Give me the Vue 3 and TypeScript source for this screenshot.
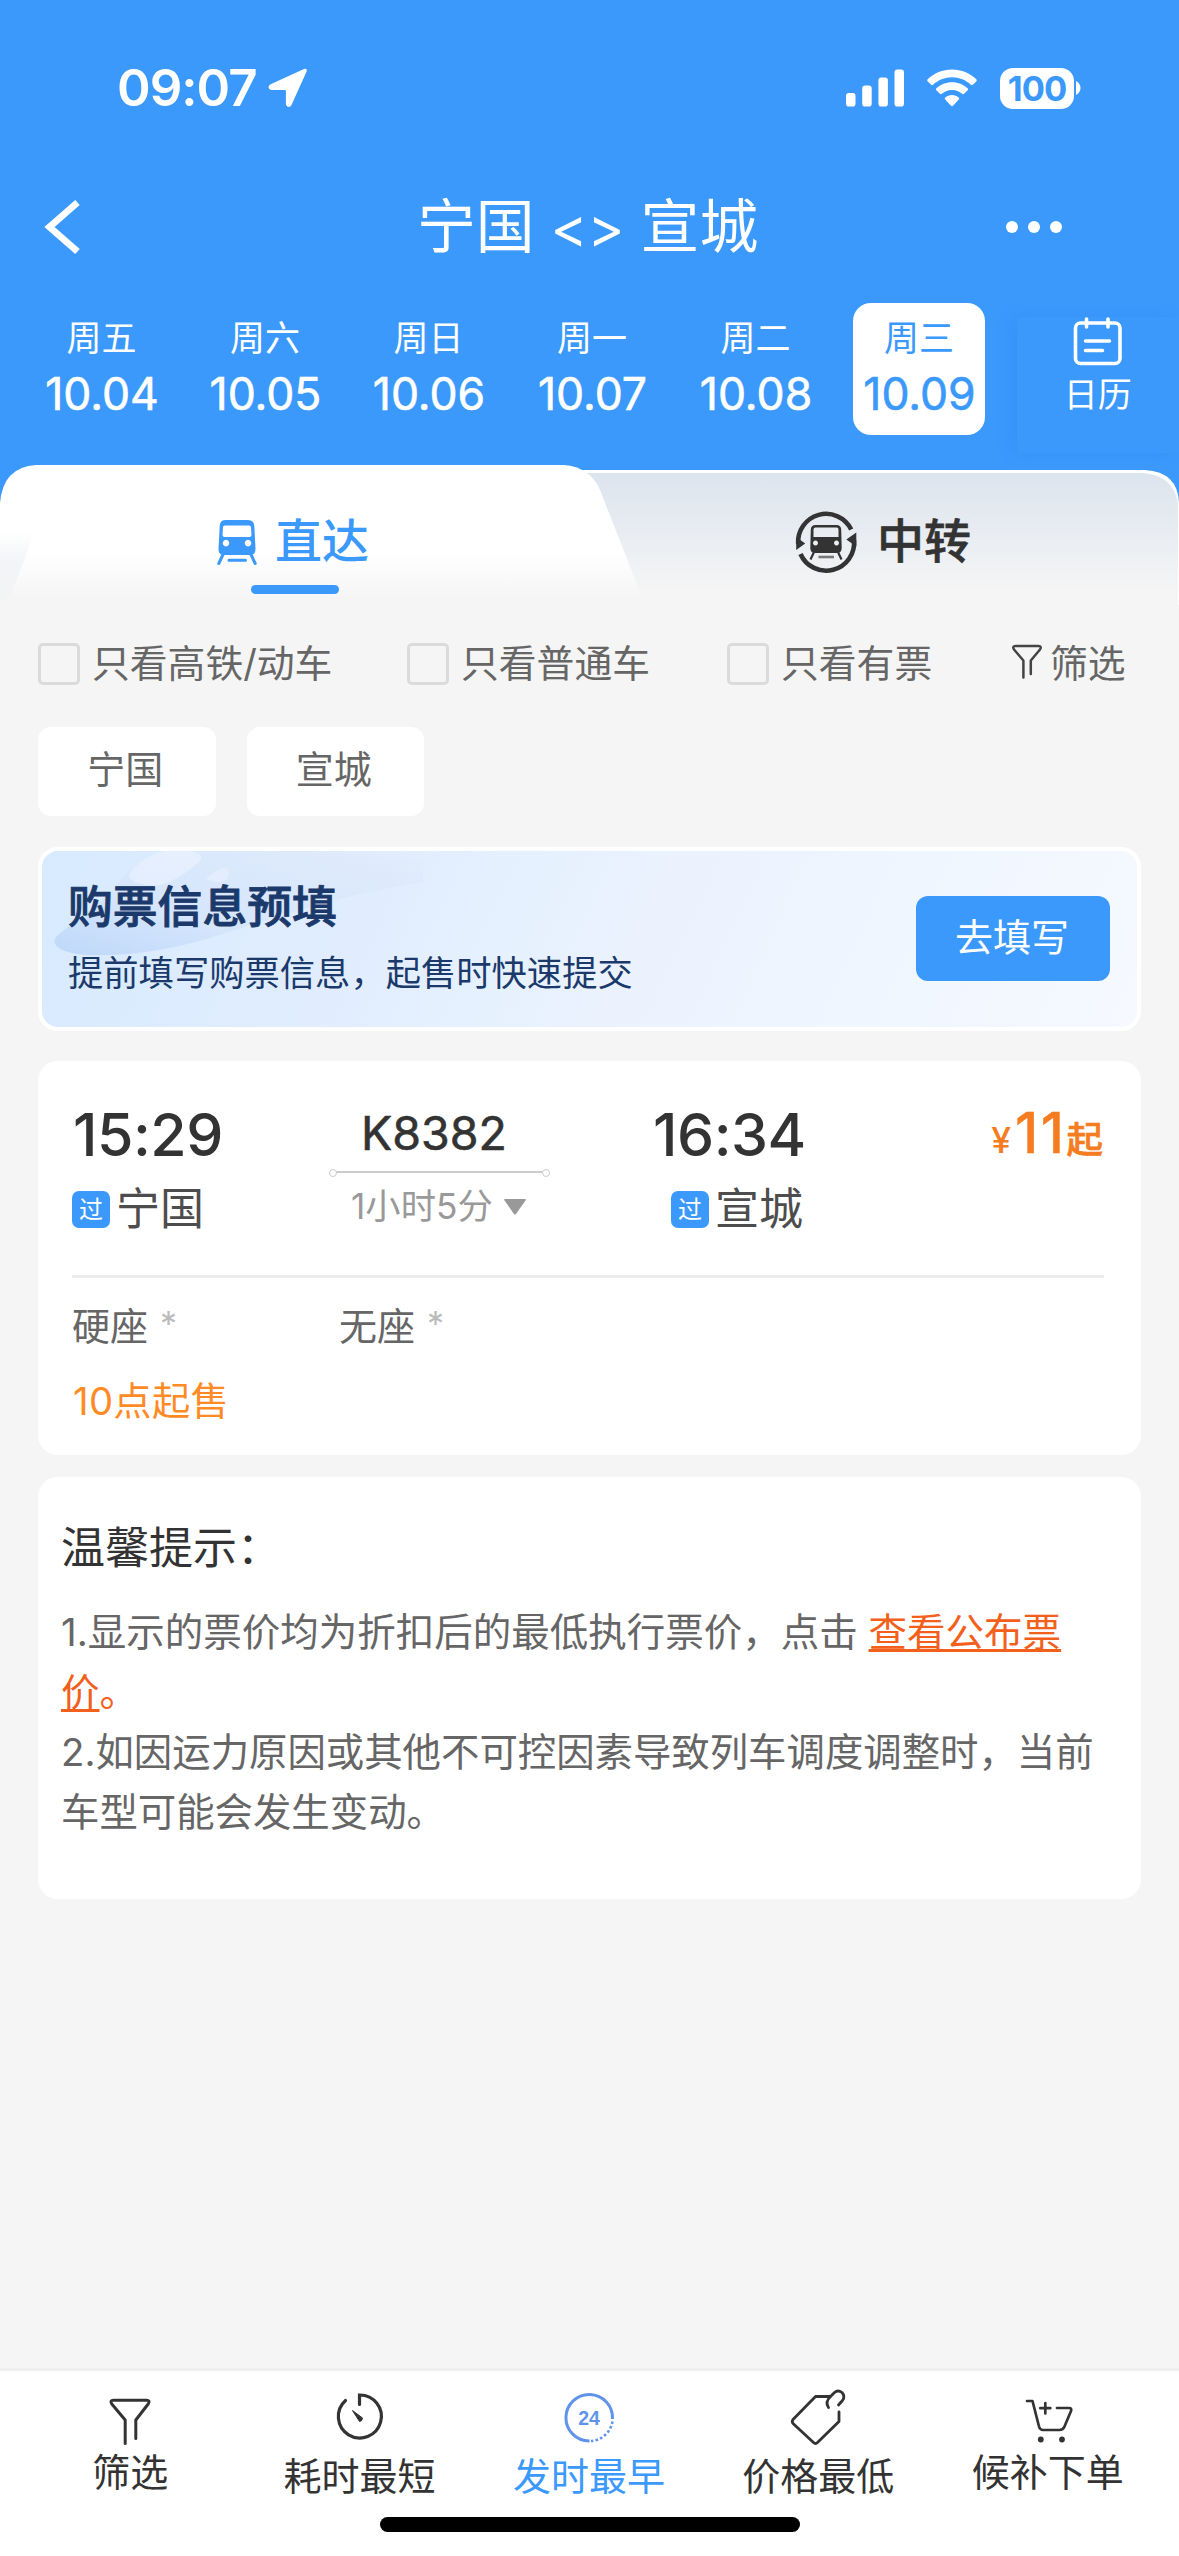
<script setup lang="ts">
interface DayItem {
  week: string
  date: string
  active?: boolean
}

const days: DayItem[] = [
  { week: '周五', date: '10.04' },
  { week: '周六', date: '10.05' },
  { week: '周日', date: '10.06' },
  { week: '周一', date: '10.07' },
  { week: '周二', date: '10.08' },
  { week: '周三', date: '10.09', active: true },
]

const checks: string[] = ['只看高铁/动车', '只看普通车', '只看有票']
const stations: string[] = ['宁国', '宣城']
const seats: string[] = ['硬座', '无座']
</script>

<template>
  <div class="page">
    <header class="top">
      <div class="status">
        <span class="clock">09:07</span>
        <svg class="loc" width="40" height="40" viewBox="0 0 40 40">
          <path d="M36 1 2.600 16.200C-.6 17.700.3 21.900 3.600 21.900H17a.9.9 0 0 1 .9.900V35.800c0 3.600 4.200 4.300 5.600 1.200L38.600 3.500C39.400 1.500 38 .2 36 1Z" fill="#fff" />
        </svg>
        <svg class="signal" width="58" height="38" viewBox="0 0 58 38">
          <rect x="0" y="24" width="9.500" height="13.500" rx="2.800" fill="#fff" />
          <rect x="16.200" y="16.500" width="9.500" height="21" rx="2.800" fill="#fff" />
          <rect x="32.400" y="8.500" width="9.500" height="29" rx="2.800" fill="#fff" />
          <rect x="48.500" y="0.500" width="9.500" height="37" rx="2.800" fill="#fff" />
        </svg>
        <svg class="wifi" width="50" height="38" viewBox="0 0 50 38">
          <path d="M25 .5C34.500.5 43 4.200 49.300 10.200c.6.6.6 1.400.1 2l-3.600 3.600c-.5.5-1.300.5-1.900 0C38.900 11.200 32.300 8.300 25 8.300S11.100 11.200 6.100 15.800c-.6.5-1.400.5-1.900 0L.6 12.200c-.5-.6-.5-1.400.1-2C7 4.200 15.500.5 25 .5Z" fill="#fff" />
          <path d="M25 13.200c6 0 11.500 2.300 15.600 6 .6.6.6 1.400.1 2l-3.700 3.600c-.5.5-1.300.5-1.900 0-2.700-2.300-6.200-3.800-10.100-3.800s-7.400 1.500-10.100 3.800c-.6.5-1.400.5-1.900 0L9.300 21.200c-.5-.6-.5-1.400.1-2 4.100-3.700 9.600-6 15.600-6Z" fill="#fff" />
          <path d="M25 26c2.600 0 4.900.9 6.700 2.400.7.600.7 1.400.1 2L26 36.800c-.6.600-1.400.600-2 0L18.200 30.400c-.6-.6-.6-1.400.1-2C20.100 26.900 22.400 26 25 26Z" fill="#fff" />
        </svg>
        <div class="battery">100</div>
        <svg class="nub" width="5" height="14" viewBox="0 0 5 14"><path d="M0 0c6 3 6 11 0 14Z" fill="#fff" /></svg>
      </div>

      <div class="nav">
        <svg class="back" width="36" height="54" viewBox="0 0 36 54">
          <path d="M32.500 2.500 4.500 27 32.500 51.500" fill="none" stroke="#fff" stroke-width="6.800" />
        </svg>
        <div class="title"><span>宁国</span><span class="swap">&lt;&gt;</span><span>宣城</span></div>
        <div class="more"><i></i><i></i><i></i></div>
      </div>

      <div class="dates">
        <div v-for="d in days" :key="d.date" class="day" :class="{ active: d.active }">
          <span class="week">{{ d.week }}</span>
          <span class="date">{{ d.date }}</span>
        </div>
        <div class="calendar">
          <svg width="50" height="50" viewBox="0 0 50 50" fill="none" stroke="#fff" stroke-linecap="round">
            <rect x="2.500" y="6" width="44.500" height="40.500" rx="5" stroke-width="3.600" />
            <path d="M13.500 2v8M35 2v8M12.500 24h24M12.500 33.500h17" stroke-width="3.600" />
          </svg>
          <span>日历</span>
        </div>
      </div>
    </header>

    <nav class="tabs">
      <svg class="tabs-bg" width="1179" height="140" viewBox="0 0 1179 140">
        <defs>
          <linearGradient id="idleFill" x1="0" y1="0" x2="0" y2="1">
            <stop offset="0" stop-color="#dce4ee" />
            <stop offset="0.9" stop-color="#f5f5f5" />
          </linearGradient>
          <linearGradient id="activeFill" x1="0" y1="0" x2="0" y2="1">
            <stop offset="0" stop-color="#fff" />
            <stop offset="0.62" stop-color="#fff" />
            <stop offset="0.96" stop-color="#f5f5f5" />
          </linearGradient>
          <linearGradient id="edgeFill" x1="0" y1="0" x2="0" y2="1">
            <stop offset="0" stop-color="#eff1f5" stop-opacity="0" />
            <stop offset="0.4" stop-color="#eff1f5" stop-opacity="0.7" />
            <stop offset="1" stop-color="#f5f5f5" />
          </linearGradient>
        </defs>
        <rect width="1179" height="60" fill="#3b99fc" />
        <path d="M300 5H1145Q1178 7 1179 38V140H300Z" fill="#fff" />
        <path d="M300 8H1143Q1173 10 1178 38V140H300Z" fill="url(#idleFill)" />
        <path d="M0 140V38Q3 2 36 0H564Q590 2 600 25L645 140Z" fill="url(#activeFill)" />
        <path d="M0 140V66H35L7 140Z" fill="url(#edgeFill)" />
      </svg>
      <div class="tab direct">
        <svg width="40" height="46" viewBox="0 0 40 46">
          <path fill-rule="evenodd" d="M8 1H31Q37 1 37.300 7L38.500 30Q38.500 36 33 36H7Q1.500 36 1.500 30L2.700 7Q3 1 8 1ZM8 6.500Q6 6.500 6 8.500L5.500 16Q5.500 18 7.500 18H32.500Q34.500 18 34.500 16L34 8.500Q34 6.500 32 6.500ZM9 20.800a3.300 3.300 0 1 0 .01 0ZM31 20.800a3.300 3.300 0 1 0 .01 0Z" fill="#3b99fc" />
          <path d="M6 35.500 1.800 44.500M34 35.500 38.200 44.500M12 41.200H28.500" stroke="#3b99fc" stroke-width="3" fill="none" stroke-linecap="round" />
        </svg>
        <span>直达</span>
        <i class="underline"></i>
      </div>
      <div class="tab transfer">
        <svg width="62" height="62" viewBox="0 0 62 62">
          <path d="M56.200 18.400A28 28 0 0 0 3.200 33M5.500 43A28 28 0 0 0 59 29" stroke="#333" stroke-width="4.600" fill="none" />
          <path d="M1.200 39V26L10.200 32.500ZM61.300 21.500V35.500L51.300 28.500Z" fill="#333" />
          <path fill-rule="evenodd" d="M20.500 14H41.500Q46 14 46.200 18.500L46.700 37Q46.700 42 42 42H20Q15.300 42 15.300 37L15.800 18.500Q16 14 20.500 14ZM20.500 16.500Q18.500 16.500 18.500 18.500V26H43.500V18.500Q43.500 16.500 41.500 16.500ZM20.500 29.500a2.500 2.500 0 1 0 .01 0ZM41.500 29.500a2.500 2.500 0 1 0 .01 0Z" fill="#333" />
          <path d="M18.800 41.500 15.500 48.500M43.200 41.500 46.500 48.500" stroke="#333" stroke-width="2.200" />
          <path d="M23.500 46H39" stroke="#777" stroke-width="2.600" />
        </svg>
        <span>中转</span>
      </div>
    </nav>

    <div class="filters">
      <label v-for="c in checks" :key="c" class="check"><i></i><span>{{ c }}</span></label>
      <div class="screen">
        <svg width="30" height="36" viewBox="0 0 30 36">
          <path d="M11.400 33.500V16.500L2 5.500Q0 2 3.500 2H26.500Q30 2 28 5.500L18.800 16.500V30" fill="none" stroke="#444" stroke-width="2.500" stroke-linecap="round" stroke-linejoin="round" />
        </svg><span>筛选</span>
      </div>
    </div>

    <div class="chips">
      <span v-for="s in stations" :key="s" class="chip">{{ s }}</span>
    </div>

    <section class="banner">
      <svg class="banner-art" width="380" height="110" viewBox="0 0 380 110">
        <defs>
          <linearGradient id="trainFill" x1="0" y1="1" x2="1" y2="0">
            <stop offset="0" stop-color="#b9d5f8" />
            <stop offset="0.35" stop-color="#d3e4fc" />
            <stop offset="1" stop-color="#e2ecfb" />
          </linearGradient>
        </defs>
        <path d="M15 85C30 72 60 52 75 34C88 16 105 4 122 0H300Q340 8 381 9V31C330 38 250 60 190 80C140 97 90 106 45 104C15 102 8 92 15 85Z" fill="url(#trainFill)" opacity=".85" />
        <path d="M88 22C98 8 112 2 122 0H150Q165 4 156 12C145 21 130 32 118 34C98 35 84 30 88 22Z" fill="#e7f0fe" opacity=".8" />
        <path d="M164 28Q176 16 184 17Q190 20 184 29Q174 34 164 28Z" fill="#e7f0fe" opacity=".7" />
      </svg>
      <div class="banner-text">
        <h2>购票信息预填</h2>
        <p>提前填写购票信息，起售时快速提交</p>
      </div>
      <button class="fill">去填写</button>
    </section>

    <section class="train">
      <div class="route">
        <div class="stop from">
          <div class="time">15:29</div>
          <div class="place"><em>过</em>宁国</div>
        </div>
        <div class="middle">
          <div class="code">K8382</div>
          <div class="line"></div>
          <div class="duration">1小时5分
            <svg width="22" height="16" viewBox="0 0 22 16"><path d="M1 0H21Q22.500 0 21.500 1.500L12 15Q11 16 10 15L.5 1.500Q-.5 0 1 0Z" fill="#999" /></svg>
          </div>
        </div>
        <div class="stop to">
          <div class="time">16:34</div>
          <div class="place"><em>过</em>宣城</div>
        </div>
        <div class="price"><small>¥</small><b>11</b><strong>起</strong></div>
      </div>
      <div class="seats">
        <div v-for="s in seats" :key="s" class="seat">{{ s }}<span>*</span></div>
      </div>
      <div class="sale">10点起售</div>
    </section>

    <section class="tips">
      <h3>温馨提示：</h3>
      <p class="first">1.显示的票价均为折扣后的最低执行票价，点击 <span class="link"><u>查看公布票<br />价</u>。</span></p>
      <p>2.如因运力原因或其他不可控因素导致列车调度调整时，当前<br />车型可能会发生变动。</p>
    </section>

    <footer class="bottom">
      <div class="item short">
        <svg width="46" height="60" viewBox="0 0 46 60">
          <path d="M18.200 50.500V27L4.800 11Q2.500 7.200 6.500 7.200H39.500Q43.500 7.200 41.200 11L28.800 27V45.500" fill="none" stroke="#333" stroke-width="3" stroke-linecap="round" stroke-linejoin="round" />
        </svg>
        <span>筛选</span>
      </div>
      <div class="item">
        <svg width="50" height="60" viewBox="0 0 50 60">
          <path d="M10.500 7.500A21.500 21.500 0 1 0 24.500 2V11.500" fill="none" stroke="#333" stroke-width="3.200" stroke-linecap="round" />
          <path d="M17.500 17.500 27.500 25Q27 28.500 24.500 28.500Z" fill="#333" stroke="#333" stroke-width="1" />
        </svg>
        <span>耗时最短</span>
      </div>
      <div class="item on">
        <svg width="54" height="60" viewBox="0 0 54 60">
          <g transform="translate(0 -1.500)">
            <path d="M50.500 27.500A23.300 23.300 0 1 0 27.500 49.500" fill="none" stroke="#5f94ea" stroke-width="3" />
            <path d="M50.500 30A23.300 23.300 0 0 1 29 49.500" fill="none" stroke="#5f94ea" stroke-width="2.600" stroke-dasharray="2.600 2.200" />
            <text x="27" y="33.200" text-anchor="middle" font-family="'Liberation Sans', sans-serif" font-weight="700" font-size="19.500" fill="#5f94ea">24</text>
          </g>
        </svg>
        <span>发时最早</span>
      </div>
      <div class="item">
        <svg width="60" height="60" viewBox="0 0 60 60" fill="none" stroke="#333" stroke-width="2.800" stroke-linecap="round" stroke-linejoin="round">
          <path d="M42 3.500H27.500L5 26.500Q3.500 28.500 5 30.500L25.500 49.500Q27.500 51.500 29.500 49.500L51 28.500V19" />
          <path d="M40.500 14.500Q36.500 9 43 3L46.500 -.5Q50 -3.500 54 -.5Q57.500 3.500 54.500 7.500L50.500 12" />
        </svg>
        <span>价格最低</span>
      </div>
      <div class="item short">
        <svg width="50" height="60" viewBox="0 0 50 60" fill="none" stroke="#333" stroke-width="2.700" stroke-linecap="round" stroke-linejoin="round">
          <path d="M4 8H9.500L16 33.500Q17 37 20 37H36.500Q40 37 41.500 33.500L48 18Q49 15 46 15H34" />
          <path d="M22.300 10V20.500M17.300 15.200H27.300" />
          <circle cx="17.800" cy="46.500" r="2.900" fill="#333" stroke="none" />
          <circle cx="39" cy="46.500" r="2.900" fill="#333" stroke="none" />
        </svg>
        <span>候补下单</span>
      </div>
      <i class="home"></i>
    </footer>
  </div>
</template>

<style>
body {
  background: #f5f5f5;
}
</style>

<style scoped>
* {
  box-sizing: border-box;
}
.page {
  width: 1179px;
  height: 2556px;
  display: flex;
  flex-direction: column;
  overflow: hidden;
  background: #f5f5f5;
  font-family: Inter, "Noto Sans CJK SC", sans-serif;
  color: #333;
}
svg {
  display: block;
  flex: none;
  overflow: visible;
}
i,
em {
  font-style: normal;
}
h2,
h3,
p {
  margin: 0;
}

.top {
  height: 465px;
  background: #3b99fc;
  color: #fff;
}
.status {
  height: 176px;
  padding: 0 98px 0 117px;
  display: flex;
  align-items: center;
}
.clock {
  font-size: 51px;
  font-weight: 600;
  line-height: 60px;
  width: 151px;
  letter-spacing: -1px;
  white-space: nowrap;
}
.signal {
  margin-left: auto;
}
.wifi {
  margin-left: 23px;
}
.battery {
  margin-left: 23px;
  width: 74px;
  height: 41px;
  border-radius: 13px;
  background: #fff;
  color: #3b99fc;
  font-size: 34.500px;
  font-weight: 700;
  line-height: 41px;
  text-align: center;
  letter-spacing: -1px;
}
.nub {
  margin-left: 2px;
}

.nav {
  height: 102px;
  padding: 0 117px 0 45px;
  display: flex;
  align-items: center;
}
.title {
  flex: 1;
  display: flex;
  align-items: center;
  font-size: 58.800px;
  line-height: 80px;
  padding-left: 336px;
}
.swap {
  width: 106px;
  padding-top: 2px;
  text-align: center;
  font-size: 56px;
}
.more {
  display: flex;
  gap: 10px;
}
.more i {
  width: 12px;
  height: 12px;
  border-radius: 50%;
  background: #fff;
}

.dates {
  display: flex;
  padding: 25px 0 0 35.500px;
}
.day {
  width: 132px;
  height: 132px;
  margin-right: 31.500px;
  padding-top: 15px;
  border-radius: 18px;
  display: flex;
  flex-direction: column;
  align-items: center;
  white-space: nowrap;
}
.week {
  font-size: 35px;
  line-height: 40px;
}
.date {
  margin-top: 16px;
  padding-left: 1px;
  font-size: 44.500px;
  font-weight: 400;
  line-height: 40px;
  -webkit-text-stroke: 0.6px currentColor;
}
.day.active {
  background: #fff;
  color: #3b99fc;
}
.calendar {
  flex: 1;
  height: 136px;
  margin-top: 14px;
  display: flex;
  flex-direction: column;
  align-items: center;
  box-shadow: -5px 0 14px rgba(30, 110, 210, 0.16);
}
.calendar span {
  margin-top: 8px;
  font-size: 34px;
  line-height: 40px;
}

.tabs {
  position: relative;
  height: 140px;
  display: flex;
}
.tabs-bg {
  position: absolute;
  left: 0;
  top: 0;
}
.tab {
  position: relative;
  height: 120px;
  margin-top: 17px;
  display: flex;
  align-items: center;
  font-size: 47px;
  font-weight: 500;
  line-height: 60px;
}
.tab span {
  padding-bottom: 3px;
}
.direct {
  width: 590px;
  padding-left: 217px;
  color: #3b99fc;
}
.direct span {
  margin-left: 18px;
}
.underline {
  position: absolute;
  left: 251px;
  top: 103px;
  width: 88px;
  height: 9px;
  border-radius: 5px;
  background: #3b99fc;
}
.transfer {
  padding-left: 205px;
  color: #333;
}
.transfer span {
  margin-left: 20px;
  -webkit-text-stroke: 0.6px #333;
}

.filters {
  height: 122px;
  padding: 0 38px 4px;
  display: grid;
  grid-template-columns: 369px 320px 286px auto;
  align-items: center;
  font-size: 37.800px;
  line-height: 50px;
  color: #666;
  white-space: nowrap;
}
.filters span {
  padding-bottom: 2px;
}
.check {
  display: flex;
  align-items: center;
}
.check i {
  width: 42px;
  height: 42px;
  margin-right: 12px;
  border: 3px solid #dbdbdb;
  border-radius: 5px;
}
.screen {
  display: flex;
  align-items: center;
}
.screen svg {
  margin: -5px 8px 0 -1px;
}

.chips {
  display: flex;
  gap: 31px;
  padding: 0 38px;
}
.chip {
  width: 177.500px;
  height: 89px;
  padding-right: 3px;
  border-radius: 13px;
  background: #fff;
  color: #666;
  font-size: 38px;
  line-height: 85px;
  text-align: center;
}

.banner {
  position: relative;
  height: 184px;
  margin: 31px 38px 0;
  border: 4px solid #fff;
  border-radius: 20px;
  overflow: hidden;
  display: flex;
  background: linear-gradient(115deg, #d7eaff 0%, #e1edfe 30%, #e5f1fe 42%, #ebf2fe 55%, #eff6ff 75%, #f6f9ff 100%);
  color: #1b3a6b;
}
.banner-art {
  position: absolute;
  left: 0;
  top: 0;
}
.banner-text {
  position: relative;
  padding: 26px 0 0 26px;
}
.banner h2 {
  font-size: 44.800px;
  font-weight: 500;
  line-height: 60px;
  -webkit-text-stroke: 0.9px #1b3a6b;
}
.banner p {
  margin-top: 12px;
  font-size: 35.300px;
  line-height: 50px;
  white-space: nowrap;
}
.fill {
  margin: 45px 27px 0 auto;
  width: 194px;
  height: 85px;
  padding: 0 2px 4px 0;
  border: 0;
  border-radius: 12px;
  background: #3b99fc;
  color: #fff;
  font: 38px/80px Inter, "Noto Sans CJK SC", sans-serif;
}

.train {
  height: 394px;
  margin: 30px 38px 0;
  padding: 0 37px 0 34px;
  border-radius: 20px;
  background: #fff;
}
.route {
  height: 217px;
  border-bottom: 3px solid #ececec;
  display: flex;
  padding-top: 40px;
}
.stop {
  width: 258px;
}
.time {
  font-size: 59px;
  font-weight: 500;
  line-height: 68px;
  letter-spacing: -0.5px;
  padding-left: 1px;
}
.place {
  height: 60px;
  margin-top: 10px;
  display: flex;
  align-items: center;
  font-size: 44px;
  line-height: 60px;
  color: #4d4d4d;
}
.place em {
  width: 38px;
  height: 37px;
  margin-right: 6px;
  border-radius: 7px;
  background: #3b99fc;
  color: #fff;
  font-size: 24px;
  line-height: 37px;
  text-align: center;
}
.middle {
  width: 219px;
}
.code {
  font-size: 46.500px;
  font-weight: 400;
  line-height: 65px;
  text-align: center;
  padding-right: 11px;
  -webkit-text-stroke: 0.6px #333;
}
.line {
  position: relative;
  height: 2px;
  margin-top: 5px;
  background: #ccc;
}
.line::before,
.line::after {
  content: "";
  position: absolute;
  top: -2px;
  width: 6px;
  height: 6px;
  border: 1.500px solid #ccc;
  border-radius: 50%;
  background: #fff;
}
.line::before {
  left: -1px;
}
.line::after {
  right: -1px;
}
.duration {
  margin-top: 9px;
  padding-left: 21px;
  display: flex;
  align-items: center;
  font-size: 35.300px;
  line-height: 50px;
  color: #999;
  white-space: nowrap;
}
.duration svg {
  margin-left: 11px;
}
.to {
  width: 250px;
  margin-left: 104px;
}
.to .time {
  padding-left: 0;
}
.to .place {
  padding-left: 18px;
}
.price {
  margin-left: auto;
  padding-right: 1px;
  display: flex;
  align-items: baseline;
  height: 70px;
  line-height: 64px;
  color: #f57c20;
  white-space: nowrap;
}
.price small {
  font-size: 35.500px;
  font-weight: 500;
  margin-right: 4px;
}
.price b {
  font-size: 56px;
  font-weight: 500;
  letter-spacing: 2.500px;
  -webkit-text-stroke: 0.4px #f57c20;
}
.price strong {
  font-size: 36.500px;
  font-weight: 500;
  -webkit-text-stroke: 0.6px #f57c20;
}
.seats {
  display: flex;
  margin-top: 23px;
}
.seat {
  display: flex;
  width: 267px;
  height: 50px;
  font-size: 38px;
  line-height: 50px;
  color: #666;
}
.seat span {
  margin-left: 12px;
  margin-top: -2px;
  font-size: 34px;
  color: #bbb;
}
.sale {
  margin-top: 25px;
  padding-left: 1px;
  font-size: 38.300px;
  line-height: 50px;
  letter-spacing: 0.3px;
  color: #ff8a26;
}

.tips {
  height: 422px;
  margin: 22px 38px 0;
  padding: 41px 0 0 23px;
  border-radius: 20px;
  background: #fff;
}
.tips h3 {
  font-size: 44px;
  font-weight: 400;
  line-height: 60px;
  margin-bottom: 24px;
}
.tips p {
  font-size: 38.400px;
  line-height: 60px;
  color: #666;
  white-space: nowrap;
}
.tips p.first {
  font-size: 38.500px;
}
.link {
  color: #f2601b;
}
.link u {
  text-decoration-thickness: 3px;
  text-underline-offset: 3px;
  text-decoration-skip-ink: none;
}

.bottom {
  position: relative;
  height: 188px;
  margin-top: auto;
  padding: 22px 15px 0 15.500px;
  display: flex;
  background: #fff;
  border-top: 3px solid #efefef;
}
.item {
  width: 229.400px;
  display: flex;
  flex-direction: column;
  align-items: center;
  font-size: 38px;
  line-height: 50px;
  white-space: nowrap;
}
.item span {
  margin-top: -2px;
}
.item.short span {
  margin-top: -6px;
}
.item.on span {
  color: #3b99fc;
}
.home {
  position: absolute;
  left: 380px;
  top: 146px;
  width: 420px;
  height: 15px;
  border-radius: 8px;
  background: #000;
}
</style>
